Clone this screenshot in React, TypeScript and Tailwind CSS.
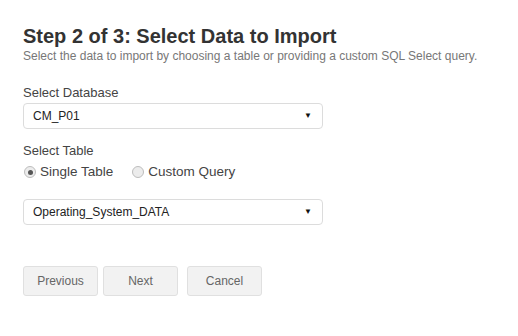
const SelectBox = ({ value }: { value: string }) => {
  return (
    <div className="flex items-center justify-between w-[300px] h-[26px] pl-[9px] pr-[10px] border border-[#dcdcdc] rounded-[4px] bg-white text-[12px] text-[#222]">
      <span>{value}</span>
      <span className="text-[8px] text-[#111]">▼</span>
    </div>
  );
};

const Radio = ({ label, checked }: { label: string; checked?: boolean }) => {
  return (
    <label className="flex items-center gap-[4px]">
      <span className="flex items-center justify-center w-[12px] h-[12px] rounded-full border border-[#bdbdbd] bg-[#ececec]">
        {checked && <span className="w-[5px] h-[5px] rounded-full bg-[#555]" />}
      </span>
      <span>{label}</span>
    </label>
  );
};

const Btn = ({ text }: { text: string }) => {
  return (
    <button className="w-[75px] h-[30px] rounded-[3px] border border-[#e0e0e0] bg-[#f2f2f2] text-[12px] text-[#666]">
      {text}
    </button>
  );
};

export default function App() {
  return (
    <div className="w-[518px] h-[336px] bg-white pl-[23px] pt-[25px] font-['Liberation_Sans',Arial,sans-serif] text-[#444]">
      <h1 className="text-[20px] leading-[22px] font-bold text-[#333]">
        Step 2 of 3: Select Data to Import
      </h1>
      <p className="mt-[3px] text-[12px] leading-[13px] text-[#777]">
        Select the data to import by choosing a table or providing a custom SQL Select query.
      </p>

      <div className="mt-[22px] text-[13px] leading-[15px]">Select Database</div>
      <div className="mt-[3px]">
        <SelectBox value="CM_P01" />
      </div>

      <div className="mt-[14px] text-[13px] leading-[15px]">Select Table</div>
      <div className="mt-[6px] flex items-center gap-[19px] pl-[1px] text-[13.5px] leading-[16px]">
        <Radio label="Single Table" checked />
        <Radio label="Custom Query" />
      </div>
      <div className="mt-[19px]">
        <SelectBox value="Operating_System_DATA" />
      </div>

      <div className="mt-[41px] flex">
        <Btn text="Previous" />
        <div className="ml-[5px]">
          <Btn text="Next" />
        </div>
        <div className="ml-[9px]">
          <Btn text="Cancel" />
        </div>
      </div>
    </div>
  );
}
